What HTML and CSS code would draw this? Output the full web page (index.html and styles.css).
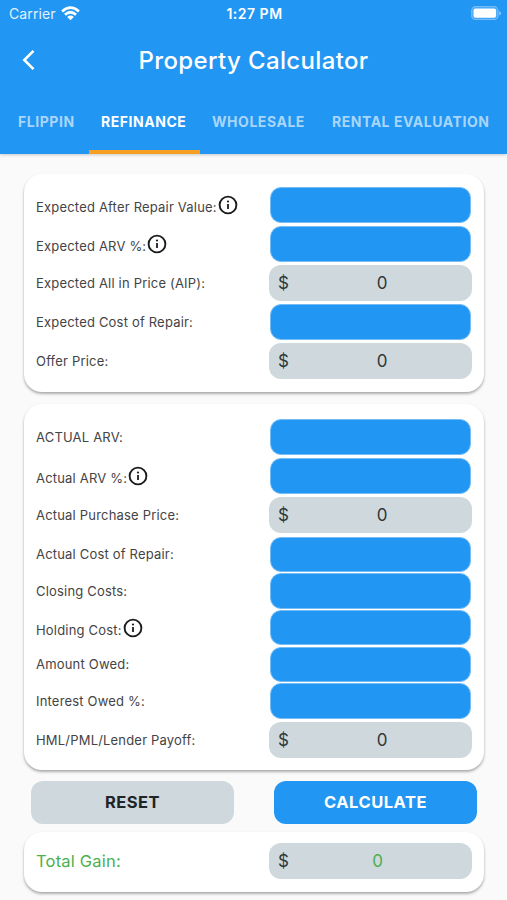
FILE: index.html
```html
<!DOCTYPE html>
<html lang="en">
<head>
<meta charset="utf-8">
<title>Property Calculator</title>
<link rel="stylesheet" href="styles.css">
</head>
<body>
<svg width="0" height="0" class="defs">
  <symbol id="info" viewBox="0 0 20 20">
    <circle cx="10" cy="10" r="8.4" fill="none" stroke="currentColor" stroke-width="1.9"/>
    <path d="M10 9v5" stroke="currentColor" stroke-width="1.8"/>
    <circle cx="10" cy="6.5" r="1.1" fill="currentColor"/>
  </symbol>
</svg>
<header class="header">
  <div class="status">
    <div class="carrier">Carrier
      <svg class="wifi" width="19" height="15" viewBox="0 0 19 15"><g fill="none" stroke="#fff" stroke-width="2.7"><path d="M1.1 5.4Q9.5-2.2 17.9 5.4"/><path d="M4 8.7Q9.5 3.8 15 8.7"/></g><path d="M6.2 11Q9.5 8.2 12.8 11L9.5 14.2Z" fill="#fff"/></svg>
    </div>
    <div class="time">1:27 PM</div>
    <svg class="battery" width="30" height="15" viewBox="0 0 30 15"><rect x=".7" y=".7" width="26.2" height="12.8" rx="3.8" fill="#42a5f5" stroke="#76bcf8" stroke-width="1.2"/><rect x="2.5" y="2.5" width="22.6" height="9.2" rx="2" fill="#fff"/><path d="M28.2 5v4.4q1.8-.8 1.8-2.2T28.2 5" fill="#90caf9"/></svg>
  </div>
  <div class="bar">
    <svg class="back" width="14" height="22" viewBox="0 0 14 22"><path d="M11.5 1.8L2.3 11L11.5 20.2" fill="none" stroke="#fff" stroke-width="2.6"/></svg>
    <h1>Property Calculator</h1>
  </div>
  <nav class="tabs">
    <span class="tab flip">FLIPPIN</span>
    <span class="tab active">REFINANCE</span>
    <span class="tab whole">WHOLESALE</span>
    <span class="tab rental">RENTAL EVALUATION</span>
  </nav>
</header>
<main>
  <section class="card expected">
    <div class="row"><label class="with-icon">Expected After Repair Value:<svg class="info"><use href="#info"/></svg></label><div class="field input"></div></div>
    <div class="row"><label class="with-icon">Expected ARV %:<svg class="info"><use href="#info"/></svg></label><div class="field input"></div></div>
    <div class="row"><label>Expected All in Price (AIP):</label><div class="field result"><span>$</span><b>0</b></div></div>
    <div class="row"><label>Expected Cost of Repair:</label><div class="field input"></div></div>
    <div class="row"><label>Offer Price:</label><div class="field result"><span>$</span><b>0</b></div></div>
  </section>
  <section class="card actual">
    <div class="row"><label>ACTUAL ARV:</label><div class="field input"></div></div>
    <div class="row"><label class="with-icon">Actual ARV %:<svg class="info"><use href="#info"/></svg></label><div class="field input"></div></div>
    <div class="row"><label>Actual Purchase Price:</label><div class="field result"><span>$</span><b>0</b></div></div>
    <div class="compact">
      <div class="row"><label>Actual Cost of Repair:</label><div class="field input"></div></div>
      <div class="row"><label>Closing Costs:</label><div class="field input"></div></div>
      <div class="row"><label class="with-icon">Holding Cost:<svg class="info"><use href="#info"/></svg></label><div class="field input"></div></div>
      <div class="row"><label>Amount Owed:</label><div class="field input"></div></div>
      <div class="row"><label>Interest Owed %:</label><div class="field input"></div></div>
    </div>
    <div class="row"><label>HML/PML/Lender Payoff:</label><div class="field result"><span>$</span><b>0</b></div></div>
  </section>
  <div class="actions"><button class="reset">RESET</button><button class="calculate">CALCULATE</button></div>
  <section class="card total">
    <div class="row"><label>Total Gain:</label><div class="field result"><span>$</span><b>0</b></div></div>
  </section>
</main>
</body>
</html>
```
FILE: styles.css
```css
* { box-sizing: border-box; }
body { margin: 0; height: 900px; overflow: hidden; background: #fafafa; font-family: Inter, "Liberation Sans", sans-serif; color: #444; }
.defs { position: absolute; }
.header { height: 153.5px; background: #2196f3; color: #fff; box-shadow: 0 1px 3px rgba(0,0,0,.2); }
.status { height: 28px; display: grid; grid-template-columns: 1fr auto 1fr; padding: 0 7px 0 9px; align-items: center; }
.carrier { display: flex; align-items: center; gap: 5.5px; font-size: 14px; letter-spacing: .1px; margin-top: -1px; color: #e3f2fd; }
.wifi { margin-top: -1px; }
.time { font-size: 14px; font-weight: 600; letter-spacing: .5px; margin-top: -1px; }
.battery { justify-self: end; margin: -1px -1px 0 0; }
.bar { height: 64px; display: grid; grid-template-columns: 44px 1fr 44px; align-items: center; }
.back { margin: -1px 0 0 22px; }
h1 { margin: 0; text-align: center; font-size: 24px; font-weight: 500; letter-spacing: .36px; }
.tabs { height: 61.5px; display: flex; }
.tab { font-size: 14px; font-weight: 700; letter-spacing: .54px; line-height: 60px; white-space: nowrap; color: #a9d5fa; }
.flip { margin-left: 18px; width: 71px; }
.active { width: 111px; padding-left: 12px; color: #fff; border-bottom: 4px solid #f5a023; }
.whole { margin-left: 12px; width: 120px; }
main { padding: 20.5px 23px 0 24px; }
.card { background: #fff; border-radius: 18px; padding: 11.5px 12px 0; box-shadow: 0 2px 3px rgba(0,0,0,.28), 0 1px 2px rgba(0,0,0,.08); }
.expected { height: 217.5px; }
.actual { height: 366.5px; margin-top: 12px; padding-top: 14px; }
.row { height: 39px; display: flex; justify-content: space-between; align-items: center; }
label { display: flex; align-items: center; font-size: 13px; letter-spacing: .19px; white-space: nowrap; }
.with-icon { line-height: 20px; align-items: flex-end; height: 24px; }
.info { width: 20px; height: 20px; margin: 0 0 2px 1px; color: #1c1c1c; }
.field { width: 203px; height: 36px; border-radius: 12px; display: flex; align-items: center; }
.input { width: 201.5px; height: 35.5px; margin-right: .8px; background: #2196f3; border: 1px solid #76bdf6; border-radius: 11px; }
.result { background: #cfd8dc; color: #30383b; padding: 0 9px; font-size: 17px; }
.result span { width: 23px; }
.result b { flex: 1; text-align: center; font-weight: 400; }
.compact { padding: 1.5px 0 1px; }
.compact .row { height: 36.7px; }
.actions { height: 43px; margin: 10.5px 7px 0; display: flex; justify-content: space-between; }
button { width: 203px; padding: 0; border: 0; border-radius: 12px; font: 700 16.5px Inter, sans-serif; letter-spacing: .5px; }
.reset { background: #cfd8dc; color: #202528; }
.calculate { background: #2196f3; color: #fff; }
.total { height: 60px; margin-top: 8px; padding-top: 10px; }
.total label { color: #4caf50; font-size: 16.5px; letter-spacing: .2px; }
.total .result b { color: #4caf50; padding-right: 9px; }
```
